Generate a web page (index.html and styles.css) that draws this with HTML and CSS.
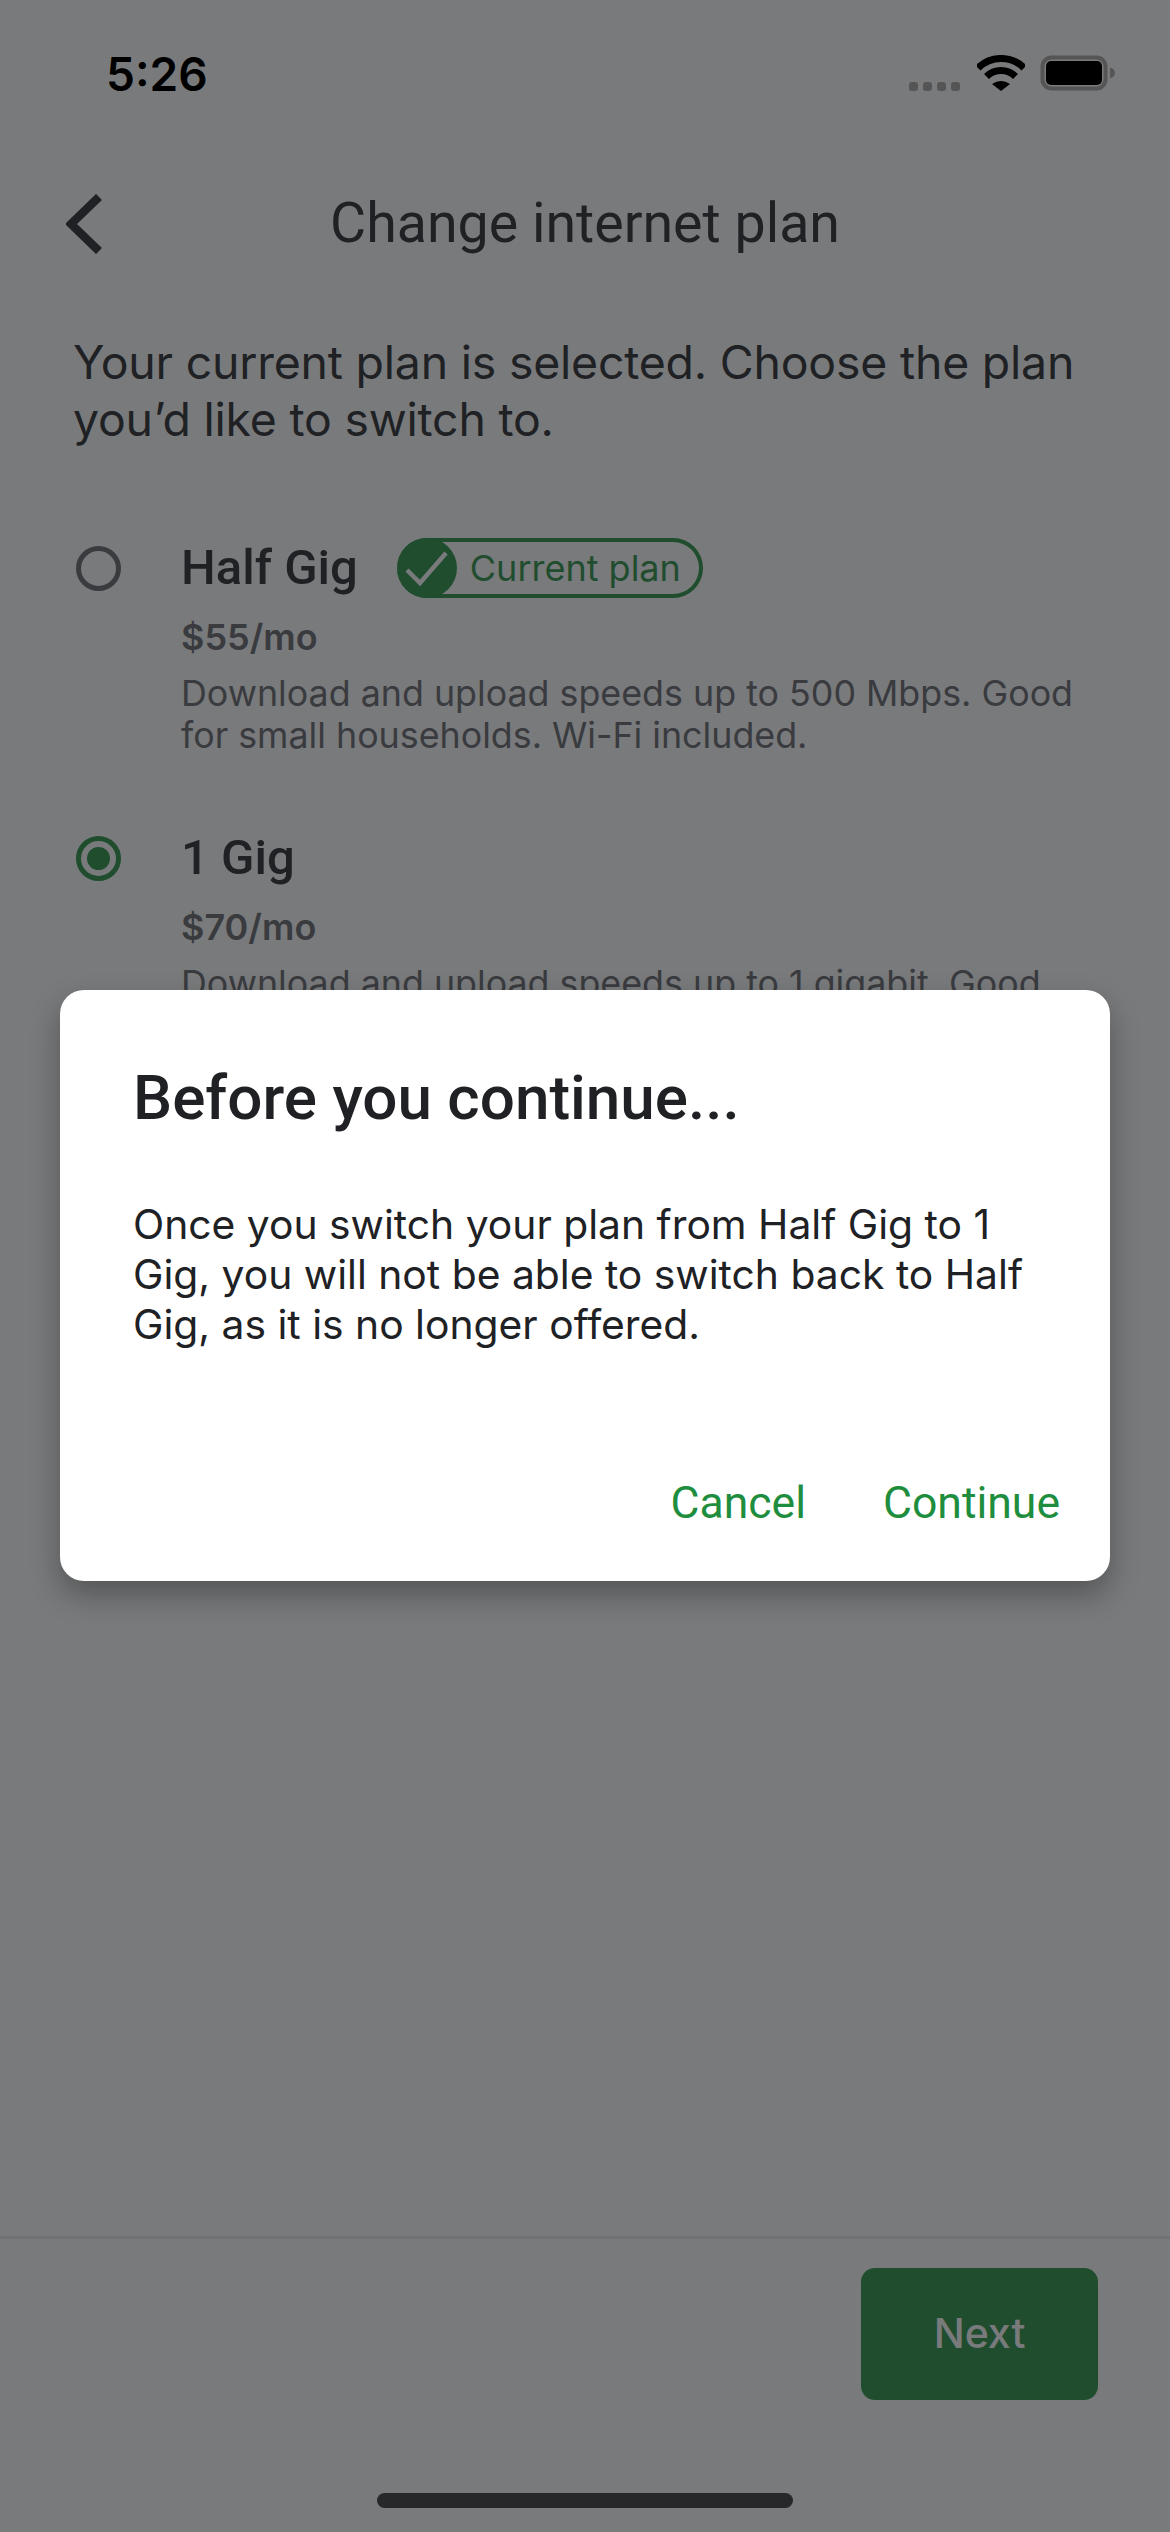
FILE: index.html
```html
<!DOCTYPE html>
<html lang="en">
<head>
  <meta charset="UTF-8">
  <meta name="viewport" content="width=device-width, initial-scale=1.0">
  <title>Change internet plan</title>
  <link rel="stylesheet" href="styles.css">
</head>
<body>
  <div class="screen">
    <div class="status-bar">
      <span class="time">5:26</span>
      <div class="status-icons">
        <div class="signal"><i></i><i></i><i></i><i></i></div>
        <svg class="wifi" width="48" height="36" viewBox="0 0 48 36">
          <path d="M1 13A32.5 32.5 0 0 1 47 13" fill="none" stroke="#000" stroke-width="7"/>
          <path d="M9.5 21.5A20.5 20.5 0 0 1 38.5 21.5" fill="none" stroke="#000" stroke-width="7"/>
          <path d="M15 29Q24 23 33 29L24 36Z" fill="#000"/>
        </svg>
        <svg class="battery" width="76" height="36" viewBox="0 0 76 36">
          <rect x="2.5" y="2.5" width="63" height="31" rx="9" fill="none" stroke="#555" stroke-width="4"/>
          <rect x="6" y="6" width="56" height="24" rx="5" fill="#000"/>
          <path d="M70 13a5 5 0 0 1 0 10z" fill="#555"/>
        </svg>
      </div>
    </div>

    <header class="top-bar">
      <svg class="back" width="36" height="60" viewBox="0 0 36 60">
        <path d="M33 3L5 30L33 57" fill="none" stroke="#202124" stroke-width="8.5"/>
      </svg>
      <h1>Change internet plan</h1>
    </header>

    <main class="content">
      <p class="intro">Your current plan is selected. Choose the plan you’d like to switch to.</p>

      <section class="plan">
        <span class="radio"></span>
        <div class="plan-info">
          <div class="plan-head">
            <h2>Half Gig</h2>
            <div class="badge">
              <span class="badge-check">
                <svg width="60" height="60" viewBox="0 0 60 60">
                  <path d="M10 32L23 45L49 15" fill="none" stroke="#fff" stroke-width="4.5"/>
                </svg>
              </span>
              <span class="badge-text">Current plan</span>
            </div>
          </div>
          <div class="price">$55/mo</div>
          <p class="desc">Download and upload speeds up to 500 Mbps. Good for small households. Wi-Fi included.</p>
        </div>
      </section>

      <section class="plan">
        <span class="radio selected"></span>
        <div class="plan-info">
          <div class="plan-head">
            <h2>1 Gig</h2>
          </div>
          <div class="price">$70/mo</div>
          <p class="desc">Download and upload speeds up to 1 gigabit. Good</p>
        </div>
      </section>
    </main>

    <footer class="bottom-bar">
      <button class="next">Next</button>
    </footer>
    <div class="home-area"><span class="home-bar"></span></div>

    <div class="scrim">
      <div class="dialog">
        <h3>Before you continue...</h3>
        <p>Once you switch your plan from Half Gig to 1 Gig, you will not be able to switch back to Half Gig, as it is no longer offered.</p>
        <div class="dialog-actions">
          <button>Cancel</button>
          <button>Continue</button>
        </div>
      </div>
    </div>
  </div>
</body>
</html>
```

FILE: styles.css
```css
* { box-sizing: border-box; }
body { margin: 0; background: #fff; color: #202124; font-family: Inter, "Liberation Sans", sans-serif; }
h1, h2, h3, p { margin: 0; font-weight: 400; }
button { border: none; background: none; padding: 0; font: inherit; }

.screen { position: relative; width: 1170px; height: 2532px; display: flex; flex-direction: column; overflow: hidden; }

.status-bar { position: relative; z-index: 2; height: 120px; padding: 46px 54px 0 106px; display: flex; justify-content: space-between; align-items: flex-start; }
.time { font-size: 46px; font-weight: 600; line-height: 56px; color: #000; }
.status-icons { display: flex; align-items: flex-start; padding-top: 9px; }
.signal { display: flex; gap: 5px; margin: 27px 17px 0 0; }
.signal i { width: 9px; height: 9px; border-radius: 3px; background: #555; }
.battery { margin-left: 15px; }
.wifi, .battery { display: block; }

.top-bar { height: 88px; margin-top: 60px; display: grid; grid-template-columns: 1fr auto 1fr; align-items: center; padding-left: 66px; }
.top-bar h1 { grid-row: 1; grid-column: 2; margin-left: -66px; font-family: Roboto, sans-serif; font-size: 55.5px; line-height: 88px; }
.back { grid-column: 1; grid-row: 1; }

.content { flex: 1; padding: 66px 0 0 73px; }
.intro { width: 1040px; font-size: 46.4px; line-height: 57px; letter-spacing: -0.2px; margin-bottom: 90px; }

.plan { display: flex; height: 290px; padding-left: 3px; }
.radio { flex: none; width: 45px; height: 45px; margin: 8px 61px 0 0; border: 5px solid #5f6368; border-radius: 50%; }
.radio.selected { border-color: #1e8e3e; display: flex; align-items: center; justify-content: center; }
.radio.selected::after { content: ""; width: 23px; height: 23px; border-radius: 50%; background: #1e8e3e; }

.plan-info { margin-left: -1px; }
.plan-head { display: flex; align-items: center; gap: 39px; height: 60px; }
.plan-head h2 { font-family: Roboto, sans-serif; font-size: 49px; font-weight: 500; line-height: 60px; }
.badge { display: flex; align-items: center; width: 306px; height: 60px; border: 4px solid #1e8e3e; border-left: none; border-radius: 30px; }
.badge-check { flex: none; width: 60px; height: 60px; margin: -4px 13px -4px 0; border-radius: 50%; background: #1e8e3e; }
.badge-check svg { display: block; }
.badge-text { font-size: 36px; line-height: 44px; color: #1e8e3e; }

.price { margin-top: 17px; font-size: 36px; font-weight: 600; line-height: 44px; color: #5f6368; }
.desc { margin-top: 13px; width: 905px; font-size: 35.8px; line-height: 42px; color: #5f6368; }

.bottom-bar { height: 296px; border-top: 3px solid #e8eaed; padding: 29px 72px 0 0; display: flex; justify-content: flex-end; align-items: flex-start; }
.next { width: 237px; height: 132px; padding-bottom: 2px; border-radius: 14px; background: #1e8e3e; color: #fff; font-size: 41px; font-weight: 500; }
.home-area { position: absolute; left: 0; right: 0; bottom: 24px; display: flex; justify-content: center; }
.home-bar { width: 416px; height: 15px; border-radius: 8px; background: #333; }

.scrim { position: absolute; inset: 0; z-index: 1; padding: 990px 60px 0; background: rgba(32, 33, 36, 0.6); }
.dialog { height: 591px; padding: 72px 50px 0 73px; border-radius: 24px; background: #fff; box-shadow: 0 14px 30px rgba(0, 0, 0, 0.3); display: flex; flex-direction: column; }
.dialog h3 { font-family: Roboto, sans-serif; font-size: 62px; font-weight: 500; line-height: 72px; }
.dialog p { margin-top: 65px; font-size: 40.8px; line-height: 50px; }
.dialog-actions { margin-top: auto; padding-bottom: 52px; display: flex; justify-content: flex-end; gap: 77px; }
.dialog-actions button { font-family: Roboto, sans-serif; font-size: 44.5px; font-weight: 450; line-height: 52px; color: #1e8e3e; }
```
